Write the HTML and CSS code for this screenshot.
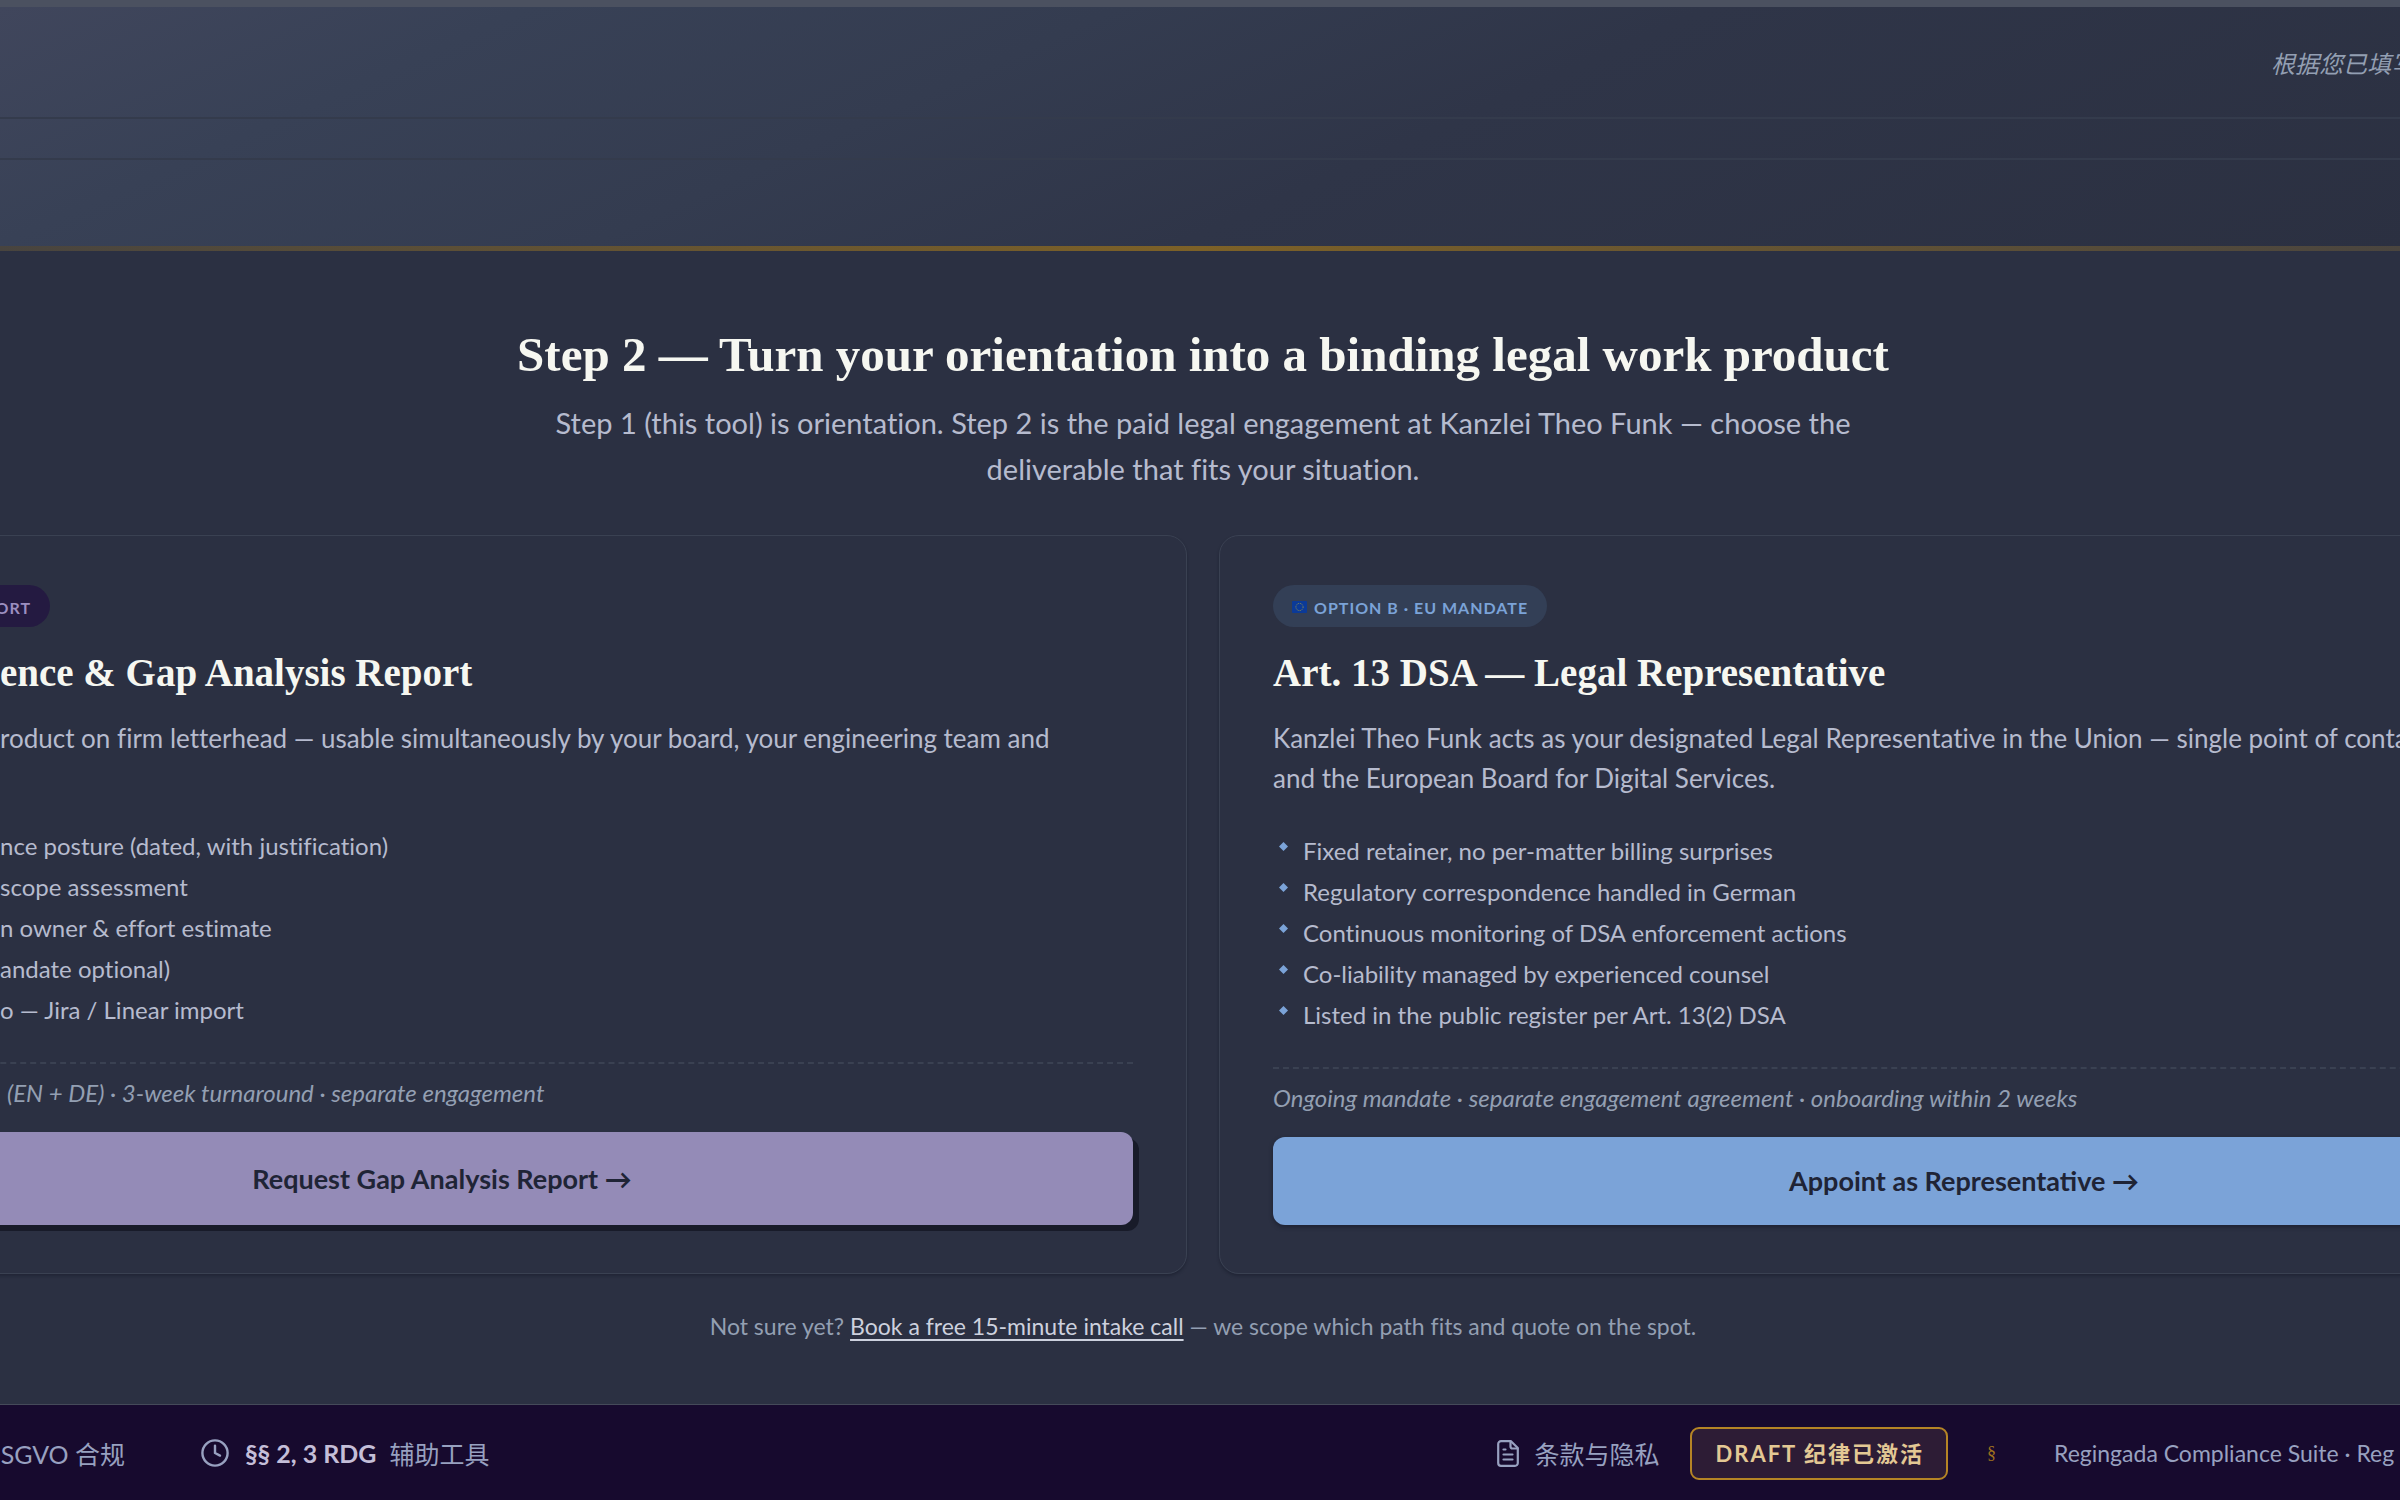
FILE: index.html
```
<!DOCTYPE html>
<html lang="en">
<head>
<meta charset="utf-8">
<title>Regingada Compliance Suite</title>
<link rel="stylesheet" href="styles.css">
</head>
<body>
<header class="banner">
  <div class="banner-top"><p class="banner-hint" lang="zh">根据您已填写</p></div>
  <div class="banner-row"></div>
  <div class="banner-base"></div>
</header>

<main class="stage">
  <h1 class="stage-title">Step 2 — Turn your orientation into a binding legal work product</h1>
  <p class="stage-lead">Step 1 (this tool) is orientation. Step 2 is the paid legal engagement at Kanzlei Theo Funk — choose the<br>deliverable that fits your situation.</p>

  <div class="options">
    <article class="card card-report">
      <span class="pill">ORT</span>
      <h2 class="card-title">ence &amp; Gap Analysis Report</h2>
      <p class="card-text">roduct on firm letterhead — usable simultaneously by your board, your engineering team and</p>
      <ul class="features">
        <li>nce posture (dated, with justification)</li>
        <li>scope assessment</li>
        <li>n owner &amp; effort estimate</li>
        <li>andate optional)</li>
        <li>o — Jira / Linear import</li>
      </ul>
      <p class="terms"><span>(EN + DE) · 3-week turnaround · separate engagement</span></p>
      <button class="action" type="button">Request Gap Analysis Report →</button>
    </article>

    <article class="card card-mandate">
      <span class="pill">
        <svg class="flag" viewBox="0 0 15 12" aria-hidden="true"><rect width="15" height="12" rx="1" fill="#0b3a98"/><circle cx="7.5" cy="6" r="3.6" fill="none" stroke="#8f8f4c" stroke-width="1" stroke-dasharray="1 .885"/></svg>
        OPTION B · EU MANDATE
      </span>
      <h2 class="card-title">Art. 13 DSA — Legal Representative</h2>
      <p class="card-text">Kanzlei Theo Funk acts as your designated Legal Representative in the Union — single point of contact<br>and the European Board for Digital Services.</p>
      <ul class="features">
        <li>Fixed retainer, no per-matter billing surprises</li>
        <li>Regulatory correspondence handled in German</li>
        <li>Continuous monitoring of DSA enforcement actions</li>
        <li>Co-liability managed by experienced counsel</li>
        <li>Listed in the public register per Art. 13(2) DSA</li>
      </ul>
      <p class="terms"><span>Ongoing mandate · separate engagement agreement · onboarding within 2 weeks</span></p>
      <button class="action" type="button">Appoint as Representative →</button>
    </article>
  </div>

  <p class="note">Not sure yet? <a href="#intake">Book a free 15-minute intake call</a> — we scope which path fits and quote on the spot.</p>
</main>

<footer class="footer">
  <div class="footer-group">
    <span class="footer-gdpr">DSGVO 合规</span>
    <span class="footer-item footer-rdg">
      <svg class="icon-clock" viewBox="0 0 28 28" fill="none" stroke="currentColor" stroke-width="2.4" stroke-linecap="round" stroke-linejoin="round" aria-hidden="true"><circle cx="14" cy="14" r="12.6"/><path d="M14 6.6V14l5 2.6"/></svg>
      <strong>§§ 2, 3 RDG</strong><span>辅助工具</span>
    </span>
  </div>
  <div class="footer-group">
    <a class="footer-item footer-terms" href="#terms">
      <svg class="icon-doc" viewBox="0 0 22 27" fill="none" stroke="currentColor" stroke-width="2.2" stroke-linecap="round" stroke-linejoin="round" aria-hidden="true"><path d="M14 1.2H4A2.8 2.8 0 0 0 1.2 4v19A2.8 2.8 0 0 0 4 25.8h14a2.8 2.8 0 0 0 2.800-2.800V8z"/><path d="M13.500 1.500V6.500a2 2 0 0 0 2 2h5M6.500 9.500h2M6.500 14.500h9M6.500 19.500h9"/></svg>
      <span>条款与隐私</span>
    </a>
    <span class="badge">DRAFT 纪律已激活</span>
    <span class="section-sign">§</span>
    <span class="suite">Regingada Compliance Suite · Reg</span>
  </div>
</footer>
</body>
</html>
```
FILE: styles.css
```
:root {
  --page: #2b3042;
  --line: #3a4152;
  --text: #b6bbce;
  --muted: #939fb2;
  --heading: #f6f7f1;
  --sans: Lato, "Noto Sans CJK SC", sans-serif;
  --serif: "Liberation Serif", "Noto Sans CJK SC", serif;
}

* { box-sizing: border-box; }

body {
  margin: 0;
  overflow-x: hidden;
  background: var(--page);
  color: var(--text);
  font-family: var(--sans);
  font-variant-ligatures: none;
}

h1, h2, p, ul { margin: 0; padding: 0; }

/* Header */
.banner {
  border-top: 7px solid #4b5160;
  background: linear-gradient(156deg, #40465c 0%, #384156 18%, #343c50 38%, #2f3548 58%, #2b3041 100%);
}
.banner-top {
  display: flex;
  justify-content: flex-end;
  height: 112px;
  padding-top: 39px;
  border-bottom: 2px solid #343b4c;
}
.banner-hint {
  width: 129px;
  overflow: hidden;
  white-space: nowrap;
  color: var(--muted);
  font-size: 24px;
  font-style: italic;
  line-height: 36px;
}
.banner-row { height: 41px; border-bottom: 2px solid #343b4c; }
.banner-base {
  height: 91px;
  border-bottom: 5px solid;
  border-image: linear-gradient(90deg, #48443f, #7d6127 50%, #4a453f) 1;
}

/* Stage */
.stage {
  margin-right: -6px;
  padding: 74px 0 62px;
  text-align: center;
}
.stage-title {
  color: var(--heading);
  font: bold 49px/60px var(--serif);
}
.stage-lead {
  margin-top: 15px;
  font-size: 29px;
  line-height: 46px;
}
.options {
  display: grid;
  grid-template-columns: 1fr 1fr;
  gap: 32px;
  margin: 43px -303px 0;
  text-align: left;
}
.card {
  display: flex;
  flex-direction: column;
  padding: 49px 53px 48px;
  border: 1px solid var(--line);
  border-radius: 20px;
  box-shadow: 0 2px 3px rgba(15, 18, 32, .35);
}
.pill {
  display: inline-flex;
  align-items: center;
  align-self: flex-start;
  gap: 7px;
  height: 42px;
  padding: 2px 19px 0;
  border-radius: 21px;
  font-size: 16px;
  font-weight: bold;
  letter-spacing: 1px;
}
.flag { width: 15px; height: 12px; }
.card-title {
  margin-top: 22px;
  color: var(--heading);
  font: bold 39px/48px var(--serif);
}
.card-text {
  min-height: 80px;
  margin: 21px 0 32px;
  font-size: 26px;
  line-height: 40px;
  white-space: nowrap;
}
.features {
  list-style: none;
  font-size: 24px;
  line-height: 41px;
}
.terms {
  margin: 32px 0 23px;
  padding-top: 13px;
  border-top: 2px dashed var(--line);
  color: var(--muted);
  font-size: 24px;
  font-style: italic;
  line-height: 32px;
}
.action {
  height: 88px;
  border: 0;
  border-radius: 12px;
  color: #1f2436;
  font: bold 27px/36px var(--sans);
}

/* The report card runs off the left side of the window */
.card-report .pill,
.card-report .card-title,
.card-report .card-text,
.card-report .features,
.card-report .terms span { margin-left: 249px; }
.card-report .pill {
  justify-content: flex-end;
  width: 50px;
  border-radius: 0 21px 21px 0;
  background: #241a41;
  color: #9c8fc0;
}
.card-report .card-text { margin-bottom: 0; }
.card-report .features { margin-top: auto; }
.card-report .terms span { padding-left: 7px; }
.card-report .action {
  height: 93px;
  background: #948bb7;
  box-shadow: 6px 6px 0 #181b29;
}

.card-mandate .pill { background: #333f56; color: #7ba3d8; }
.card-mandate .features li {
  display: flex;
  align-items: center;
  gap: 15px;
  padding-left: 6px;
}
.card-mandate .features li::before {
  content: "";
  width: 9px;
  height: 9px;
  margin-bottom: 8px;
  background: #7ba3d8;
  clip-path: polygon(50% 0, 100% 50%, 50% 100%, 0 50%);
}
.card-mandate .action {
  background: #7ba3d8;
  box-shadow: 0 2px 4px rgba(15, 18, 32, .5);
}

.note {
  margin-top: 36px;
  color: var(--muted);
  font-size: 23px;
  line-height: 32px;
}
.note a {
  color: #cdd1de;
  text-decoration-thickness: 2px;
  text-underline-offset: 4px;
}

/* Footer */
.footer {
  display: flex;
  justify-content: space-between;
  height: 97px;
  overflow: hidden;
  border-top: 1px solid #454a59;
  background: #170a2e;
  color: #98a1c0;
  font-size: 25px;
  white-space: nowrap;
}
.footer-group, .footer-item { display: flex; align-items: center; }
.footer-gdpr {
  display: flex;
  justify-content: flex-end;
  width: 125px;
}
.footer-rdg { margin-left: 76px; }
.footer-rdg strong { margin: 0 13px 0 16px; color: #c4bed8; }
.icon-clock { width: 28px; height: 28px; }
.icon-doc { width: 22px; height: 27px; }
.footer-terms { gap: 16px; color: inherit; text-decoration: none; }
.badge {
  margin-left: 30px;
  padding: 8px 22px 8px 24px;
  border: 2px solid #b58525;
  border-radius: 9px;
  background: #2d1c35;
  color: #e3c894;
  font-size: 22px;
  font-weight: bold;
  line-height: 33px;
  letter-spacing: 2px;
}
.section-sign {
  margin: 0 58px 0 39px;
  color: #a0731d;
  font: 18px/24px var(--serif);
}
.suite { width: 346px; font-size: 23px; }
```
